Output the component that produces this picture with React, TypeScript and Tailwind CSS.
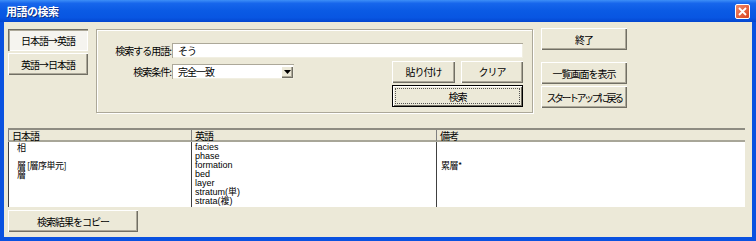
import React from "react";

const F = "font-['Noto_Sans_CJK_JP','Liberation_Sans',sans-serif]";
const FL = "font-['Liberation_Sans','Noto_Sans_CJK_JP',sans-serif]";

const raised =
  "bg-[#ece9d8] shadow-[inset_1px_1px_0_#ffffff,inset_-1px_-1px_0_#716f64,inset_-2px_-2px_0_#aca899]";

function Btn({ children, className = "" }: { children: React.ReactNode; className?: string }) {
  return (
    <div className={`flex items-center justify-center h-[22px] text-[10px] tracking-[-1px] whitespace-nowrap text-black ${raised} ${className}`}>
      {children}
    </div>
  );
}

export default function App() {
  const jp = ["相", "", "層 [層序単元]", "層", "", "", ""];
  const en = ["facies", "phase", "formation", "bed", "layer", "stratum(単)", "strata(複)"];
  const note = ["", "", "累層*", "", "", "", ""];
  return (
    <div className={`w-[756px] h-[241px] flex flex-col bg-[#0a52e0] ${F} overflow-hidden`}>
      {/* title bar */}
      <div className="h-[22px] flex items-center bg-[linear-gradient(180deg,#3d8ff7_0%,#1766ec_15%,#0a5ae4_50%,#0856e2_80%,#0446cf_100%)]">
        <span className="ml-[6px] text-white font-bold text-[11px] tracking-[-0.5px] [text-shadow:1px_1px_0_#0a2a80]">用語の検索</span>
        <div className="ml-auto mr-[6px] w-[15px] h-[15px] rounded-[2px] border border-white bg-[linear-gradient(135deg,#f08a6a,#d9421e)] flex items-center justify-center">
          <svg width="9" height="9" viewBox="0 0 9 9">
            <path d="M1 1 L8 8 M8 1 L1 8" stroke="#ffffff" strokeWidth="1.8" />
          </svg>
        </div>
      </div>
      {/* body */}
      <div className="flex-1 mx-[4px] mb-[4px] bg-[#ece9d8] flex flex-col pl-[4px] pt-[6px]">
        <div className="flex items-start h-[85px]">
          {/* left toggle buttons */}
          <div className="mt-[1px] w-[80px] flex flex-col gap-[2px]">
            <div className="flex items-center justify-center h-[22px] text-[10px] tracking-[-1px] text-black bg-[#f5f4ef] shadow-[inset_1px_1px_0_#716f64,inset_2px_2px_0_#aca899,inset_-1px_-1px_0_#ffffff]">
              日本語→英語
            </div>
            <Btn>英語→日本語</Btn>
          </div>
          {/* group box */}
          <div className="ml-[8px] mt-[1px] w-[437px] h-[84px] border border-[#aca899] shadow-[inset_1px_1px_0_#ffffff,1px_1px_0_#ffffff] flex flex-col pr-[9px] text-[10px] tracking-[-1px] text-black">
            <div className="mt-[13px] flex items-center h-[15px]">
              <div className="w-[74px] text-right">検索する用語:</div>
              <div className="ml-[1px] flex-1 h-[15px] bg-white flex items-center pl-[6px] shadow-[inset_1px_1px_0_#aca899,inset_-1px_-1px_0_#f1efe2]">
                そう
              </div>
            </div>
            <div className="mt-[3px] flex items-center h-[21px]">
              <div className="w-[74px] text-right">検索条件:</div>
              <div className="ml-[1px] w-[122px] h-[15px] bg-white flex items-center pl-[6px] shadow-[inset_1px_1px_0_#aca899,inset_-1px_-1px_0_#f1efe2]">
                <span className="flex-1">完全一致</span>
                <div className={`w-[12px] h-[12px] mr-[1px] flex items-center justify-center ${raised}`}>
                  <svg width="7" height="4" viewBox="0 0 7 4">
                    <path d="M0 0 H7 L3.5 4 Z" fill="#000" />
                  </svg>
                </div>
              </div>
              <div className="flex-1" />
              <Btn className="w-[63px] h-[21px]">貼り付け</Btn>
              <Btn className="ml-[6px] w-[62px] h-[21px]">クリア</Btn>
            </div>
            <div className="mt-[3px] self-end w-[131px] h-[22px] border border-black p-[2px] bg-[#ece9d8] shadow-[inset_1px_1px_0_#ffffff,inset_-1px_-1px_0_#716f64]">
              <div className="w-full h-full border border-dotted border-[#555] flex items-center justify-center">
                検索
              </div>
            </div>
          </div>
          {/* right buttons */}
          <div className="ml-[8px] w-[86px] flex flex-col">
            <Btn>終了</Btn>
            <Btn className="mt-[12px]">一覧画面を表示</Btn>
            <Btn className="mt-[2px] tracking-[-2.5px]">スタートアップに戻る</Btn>
          </div>
        </div>
        {/* list */}
        <div className="mt-[15px] w-[737px] flex flex-col text-[10px] tracking-[-1px] text-black">
          <div className="h-[14px] grid grid-cols-[183px_245px_309px] border-t-2 border-[#8e8c82] border-b-2 border-b-[#a8a698] bg-[#ece9d8]">
            <div className="pl-[3px] leading-[11px] border-l border-[#808080]">日本語</div>
            <div className="pl-[3px] leading-[11px] border-l border-[#808080]">英語</div>
            <div className="pl-[3px] leading-[11px] border-l border-[#808080]">備考</div>
          </div>
          <div className="h-[65px] grid grid-cols-[183px_245px_309px] bg-white text-[9px] tracking-[-0.5px]">
            <div className="border-l border-[#404040] pl-[8px] pt-[1px] leading-[9px]">
              {jp.map((t, i) => (
                <div key={i} className="h-[9px] overflow-visible whitespace-nowrap">{t}</div>
              ))}
            </div>
            <div className={`border-l border-[#404040] pl-[3px] pt-[1px] leading-[9px] tracking-normal ${FL}`}>
              {en.map((t, i) => (
                <div key={i} className="h-[9px] whitespace-nowrap">{t}</div>
              ))}
            </div>
            <div className="border-l border-[#404040] pl-[4px] pt-[1px] leading-[9px]">
              {note.map((t, i) => (
                <div key={i} className="h-[9px] whitespace-nowrap">{t}</div>
              ))}
            </div>
          </div>
        </div>
        <Btn className="mt-[3px] w-[130px]">検索結果をコピー</Btn>
      </div>
    </div>
  );
}
